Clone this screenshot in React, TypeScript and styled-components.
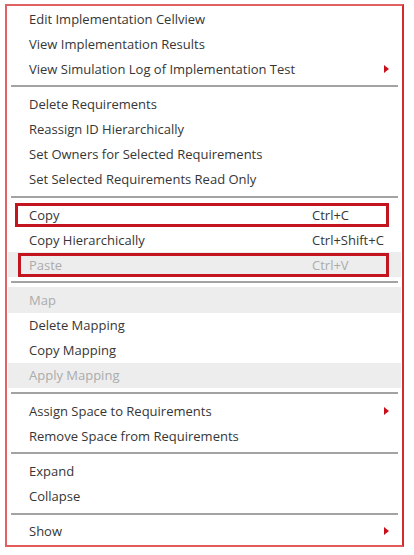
import React from 'react';
import styled, { createGlobalStyle } from 'styled-components';

const GlobalStyle = createGlobalStyle`
  html, body {
    margin: 0;
    padding: 0;
    background: #fff;
  }
  body {
    font-family: 'Open Sans', 'Noto Sans', sans-serif;
  }
`

const Menu = styled.div`
  box-sizing: border-box;
  width: 399px;
  margin: 4px 0 0 5px;
  padding: 0 1px 1px;
  background: #fff;
  border: 2px solid #e06262;
  border-right-color: #d42a2a;
  border-bottom-color: #e35a5a;
`

const Row = styled.div<{ $disabled?: boolean; $boxLeft?: number }>`
  position: relative;
  display: flex;
  align-items: center;
  height: 25.15px;
  padding-left: 21px;
  font-size: 13px;
  color: ${p => (p.$disabled ? '#ababab' : '#363636')};
  background: ${p => (p.$disabled ? '#ededed' : 'transparent')};

  ${p =>
    p.$boxLeft !== undefined &&
    `
    &::after {
      content: '';
      position: absolute;
      left: ${p.$boxLeft}px;
      right: 12px;
      top: 1px;
      bottom: 0;
      border: 3px solid #c3151f;
      pointer-events: none;
    }
  `}
`

const Label = styled.span`
  flex: 1;
  white-space: nowrap;
`

const Trail = styled.span`
  width: 89px;
  display: flex;
  align-items: center;
  white-space: nowrap;
`

const ArrowCell = styled(Trail)`
  justify-content: flex-end;
  padding-right: 12px;
  box-sizing: border-box;
`

const Separator = styled.div`
  height: 10px;
  display: flex;
  align-items: center;
  padding: 0 3px;

  &::before {
    content: '';
    flex: 1;
    height: 2px;
    background: #a3a3a3;
  }
`

const SubArrow = () => (
  <svg width="5" height="8" viewBox="0 0 5 8">
    <polygon points="0,0 5,4 0,8" fill="#c8101a" />
  </svg>
)

type Item = {
  label: string
  shortcut?: string
  sub?: boolean
  disabled?: boolean
  boxLeft?: number
}

const groups: Item[][] = [
  [
    { label: 'Edit Implementation Cellview' },
    { label: 'View Implementation Results' },
    { label: 'View Simulation Log of Implementation Test', sub: true },
  ],
  [
    { label: 'Delete Requirements' },
    { label: 'Reassign ID Hierarchically' },
    { label: 'Set Owners for Selected Requirements' },
    { label: 'Set Selected Requirements Read Only' },
  ],
  [
    { label: 'Copy', shortcut: 'Ctrl+C', boxLeft: 7 },
    { label: 'Copy Hierarchically', shortcut: 'Ctrl+Shift+C' },
    { label: 'Paste', shortcut: 'Ctrl+V', disabled: true, boxLeft: 10 },
  ],
  [
    { label: 'Map', disabled: true },
    { label: 'Delete Mapping' },
    { label: 'Copy Mapping' },
    { label: 'Apply Mapping', disabled: true },
  ],
  [
    { label: 'Assign Space to Requirements', sub: true },
    { label: 'Remove Space from Requirements' },
  ],
  [{ label: 'Expand' }, { label: 'Collapse' }],
  [{ label: 'Show', sub: true }],
]

const App: React.FC = () => {
  return (
    <>
      <GlobalStyle />
      <Menu>
        {groups.map((group, gi) => (
          <React.Fragment key={gi}>
            {gi > 0 && <Separator />}
            {group.map(item => (
              <Row key={item.label} $disabled={item.disabled} $boxLeft={item.boxLeft}>
                <Label>{item.label}</Label>
                {item.sub ? (
                  <ArrowCell>
                    <SubArrow />
                  </ArrowCell>
                ) : (
                  <Trail>{item.shortcut}</Trail>
                )}
              </Row>
            ))}
          </React.Fragment>
        ))}
      </Menu>
    </>
  )
}

export default App
